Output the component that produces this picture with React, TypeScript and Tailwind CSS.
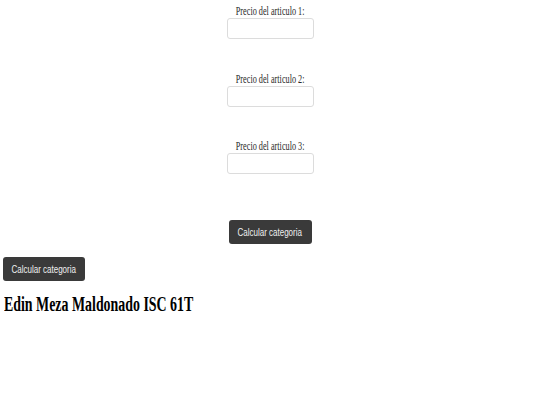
import React from "react";

function Field({ label, top }: { label: string; top: string }) {
  return (
    <div className={`flex flex-col items-center ${top}`}>
      <div className="h-[14px] leading-[14px] text-[12px] text-[#2a2a2a] whitespace-nowrap">
        <span className="inline-block scale-x-[0.685]">{label}</span>
      </div>
      <input
        type="text"
        className="w-[87px] h-[21px] border border-[#dcdcdc] rounded-[3px] bg-white outline-none"
      />
    </div>
  );
}

export default function App() {
  return (
    <div className="w-[540px] h-[405px] bg-white overflow-hidden font-['Liberation_Serif',serif]">
      <div className="flex flex-col items-center pt-[4px]">
        <Field label="Precio del articulo 1:" top="" />
        <Field label="Precio del articulo 2:" top="mt-[33px]" />
        <Field label="Precio del articulo 3:" top="mt-[32px]" />
        <button className="mt-[46px] w-[83px] h-[24px] bg-[#3a3a3a] rounded-[3px] text-[#f0f0f0] text-[11.6px] font-['Liberation_Sans',sans-serif] whitespace-nowrap flex items-center justify-center">
          <span className="inline-block scale-x-[0.69]">Calcular categoria</span>
        </button>
      </div>
      <div className="flex flex-col items-start">
        <button className="ml-[3px] mt-[13px] w-[82px] h-[24px] bg-[#3a3a3a] rounded-[3px] text-[#f0f0f0] text-[11.6px] font-['Liberation_Sans',sans-serif] whitespace-nowrap flex items-center justify-center">
          <span className="inline-block scale-x-[0.69]">Calcular categoria</span>
        </button>
        <h1 className="ml-[4px] mt-[11px] text-[20px] leading-[24px] font-bold text-black whitespace-nowrap">
          <span className="inline-block origin-left scale-x-[0.695]">Edin Meza Maldonado ISC 61T</span>
        </h1>
      </div>
    </div>
  );
}
